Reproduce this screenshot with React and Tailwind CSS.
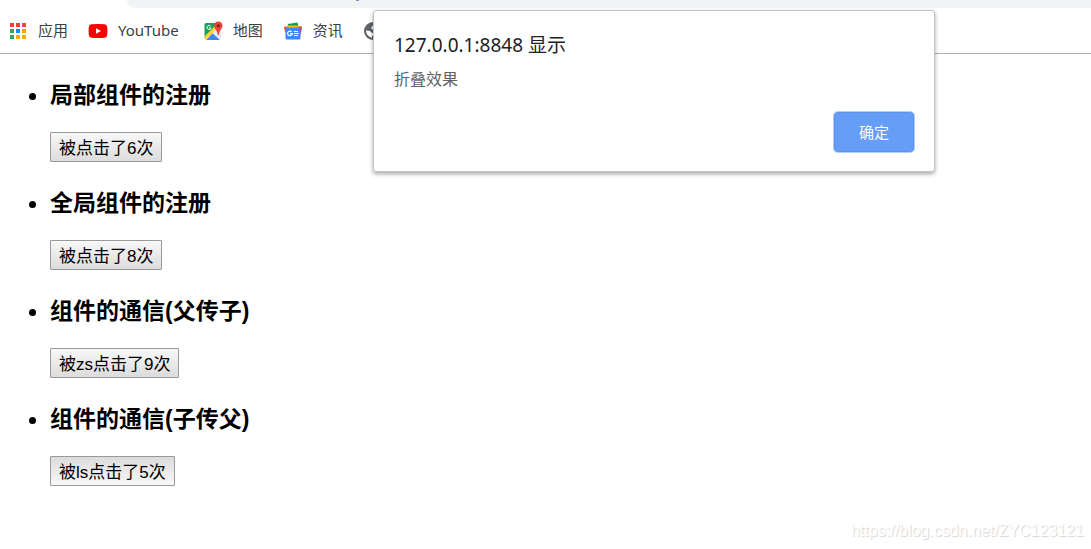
import React, { useState } from "react";
import clsx from "clsx";

const AppsIcon = () => (
  <svg width="18" height="18" viewBox="0 0 18 18" shapeRendering="crispEdges">
    <path fill="#ea4335" d="M1 1h4v4H1zM7 1h4v4H7zM13 1h4v4h-4z" />
    <path fill="#34a853" d="M1 7h4v4H1zM1 13h4v4H1z" />
    <path fill="#1e88f5" d="M7 7h4v4H7z" />
    <path fill="#fbab00" d="M13 7h4v4h-4zM7 13h4v4H7zM13 13h4v4h-4z" />
  </svg>
);

const YouTubeIcon = () => (
  <svg width="20" height="20" viewBox="0 0 20 20">
    <path
      fill="#ff0000"
      d="M3.5 3.3Q10 2.7 16.5 3.3Q19 3.5 19.2 6Q19.7 10 19.2 14Q19 16.5 16.5 16.7Q10 17.3 3.5 16.7Q1 16.5 .8 14Q.3 10 .8 6Q1 3.5 3.5 3.3z"
    />
    <path fill="#fff" d="M8 7.2v5.6l5-2.8z" />
  </svg>
);

const MapsIcon = () => (
  <svg width="20" height="20" viewBox="0 0 20 20">
    <path fill="#1e9e5a" d="M3 2h13L3 15.5L1.5 17V3.5Q1.5 2 3 2z" />
    <path fill="#fdd835" d="M1.5 15.5L13 4l2.5 2.5L3 19Q1.5 19 1.5 17z" />
    <path fill="#e8eaed" d="M9.5 12l3-3.5l5.5 1V17.5L17 19z" />
    <path fill="#4285f4" d="M3.2 19L9.7 12.3L16.8 19z" />
    <path
      d="M7.6 5.2A2 2 0 1 0 8 7H6"
      fill="none"
      stroke="#fff"
      strokeWidth="1"
    />
    <path
      fill="#ea4335"
      d="M15.3 .5a4.2 4.2 0 0 1 4.2 4.2c0 3.2-3.4 4.3-3.7 9.5h-1c-.3-5.2-3.7-6.3-3.7-9.5A4.2 4.2 0 0 1 15.3 .5z"
    />
    <circle cx="15.3" cy="4.8" r="1.5" fill="#7b231c" />
  </svg>
);

const NewsIcon = () => (
  <svg width="20" height="20" viewBox="0 0 20 20">
    <path fill="#0f9d58" d="M5 3l9.5-1.5l1 5H5z" />
    <path fill="#ea4335" d="M13 4.5l6.2 1.2l-1.5 8l-5-3z" />
    <path fill="#ea4335" d="M1 6l5-1v5l-4 1z" />
    <path fill="#fbbc04" d="M4 4.5h9.5l2 .5v3H4z" />
    <rect x="2.5" y="6.5" width="15" height="12" rx="1.2" fill="#4285f4" />
    <path
      d="M8.6 10.9A2.3 2.3 0 1 0 9.2 12.6H7"
      fill="none"
      stroke="#fff"
      strokeWidth="1.2"
    />
    <path fill="#fff" d="M11 10h4v1h-4zM11 12h4.8v1H11zM11 14h4v1h-4z" />
  </svg>
);

const GlobeIcon = () => (
  <svg width="20" height="20" viewBox="0 0 20 20">
    <circle cx="10" cy="10" r="9" fill="#5f6368" />
    <path
      fill="#fff"
      d="M3 9.5l4 .4l2 2l2.2.2v2l-2.2.6v2.1Q3.3 15.5 3 9.5zM8 7.2l1.2-2.2l2.2-.6V2.7l4 2.1l2.4 4l-2.2 1.4l-2.4-1.4l-2.2.8z"
    />
  </svg>
);

const bookmarks = [
  { name: "应用", icon: <AppsIcon />, space: "mr-5" },
  { name: "YouTube", icon: <YouTubeIcon />, space: "mr-6" },
  { name: "地图", icon: <MapsIcon />, space: "mr-5" },
  { name: "资讯", icon: <NewsIcon />, space: "mr-5" },
];

const sections = [
  { title: "局部组件的注册", who: "", start: 6 },
  { title: "全局组件的注册", who: "", start: 8 },
  { title: "组件的通信(父传子)", who: "zs", start: 9 },
  { title: "组件的通信(子传父)", who: "ls", start: 5, pressed: true },
];

const CountButton = ({ who, start, pressed }) => {
  const [count, setCount] = useState(start);

  return (
    <button
      onClick={() => setCount(count + 1)}
      className={clsx(
        "block h-[30px] rounded-[1px] border border-[#999] px-2 pt-1 text-[17px] leading-6 text-black",
        pressed
          ? "bg-linear-to-b from-[#dcdcdc] to-[#f8f8f8]"
          : "bg-linear-to-b from-[#f8f8f8] to-[#dcdcdc]"
      )}
    >
      被{who}点击了{count}次
    </button>
  );
};

const BrowserBar = () => (
  <header className="border-b border-[#b1b1b1] font-['Noto_Sans','Noto_Sans_CJK_SC',sans-serif]">
    {/* bottom edge of the address bar */}
    <div className="ml-[127px] h-2 rounded-bl-2xl bg-[#f1f3f4]">
      <div className="ml-[229px] h-px w-[3px] bg-[#7b8fc0]"></div>
    </div>
    <nav className="flex h-[45px] items-center overflow-hidden pl-2 text-[15px] text-[#3c4043]">
      {bookmarks.map(({ name, icon, space }) => (
        <a
          key={name}
          href="#"
          className={clsx("flex shrink-0 items-center gap-2.5", space)}
        >
          <span className="flex w-5 justify-center">{icon}</span>
          {name}
        </a>
      ))}
      <a href="#" aria-label="网页">
        <GlobeIcon />
      </a>
    </nav>
  </header>
);

const AlertDialog = ({ onClose }) => (
  <div
    role="alertdialog"
    aria-labelledby="alert-title"
    className="absolute left-[373px] top-[10px] w-[562px] rounded-[3px] border border-[#c4c4c4] bg-white px-5 pb-[19px] pt-5 font-['Noto_Sans','Noto_Sans_CJK_SC',sans-serif] shadow-[0_2px_4px_rgba(0,0,0,0.35)]"
  >
    <h2 id="alert-title" className="text-[19px] leading-7 text-[#202124]">
      127.0.0.1:8848 显示
    </h2>
    <p className="mt-2 text-base leading-6 text-[#5f6368]">折叠效果</p>
    <div className="mt-[21px] flex justify-end">
      <button
        onClick={onClose}
        className="h-10 w-20 rounded-[4px] border border-[#5a94f5] bg-[#669df6] text-[15px] text-white ring-1 ring-[#b3cefb]"
      >
        确定
      </button>
    </div>
  </div>
);

const App = () => {
  const [open, setOpen] = useState(true);

  return (
    <div className="relative min-h-screen bg-white">
      <BrowserBar />
      <main className="pt-6 font-['Liberation_Sans','Noto_Sans_CJK_SC',sans-serif] text-black">
        <ul className="list-disc space-y-6 pl-[50px] text-2xl">
          {sections.map(({ title, ...rest }) => (
            <li key={title}>
              <h3 className="mb-5 text-[23px] font-bold leading-[34px]">
                {title}
              </h3>
              <CountButton {...rest} />
            </li>
          ))}
        </ul>
      </main>
      {open && <AlertDialog onClose={() => setOpen(false)} />}
      <p className="absolute bottom-1.5 right-[7px] font-['Liberation_Sans',sans-serif] text-base text-white text-shadow-[1px_1px_1px_#d4d4d4]">
        https://blog.csdn.net/ZYC123121
      </p>
    </div>
  );
};

export default App;
